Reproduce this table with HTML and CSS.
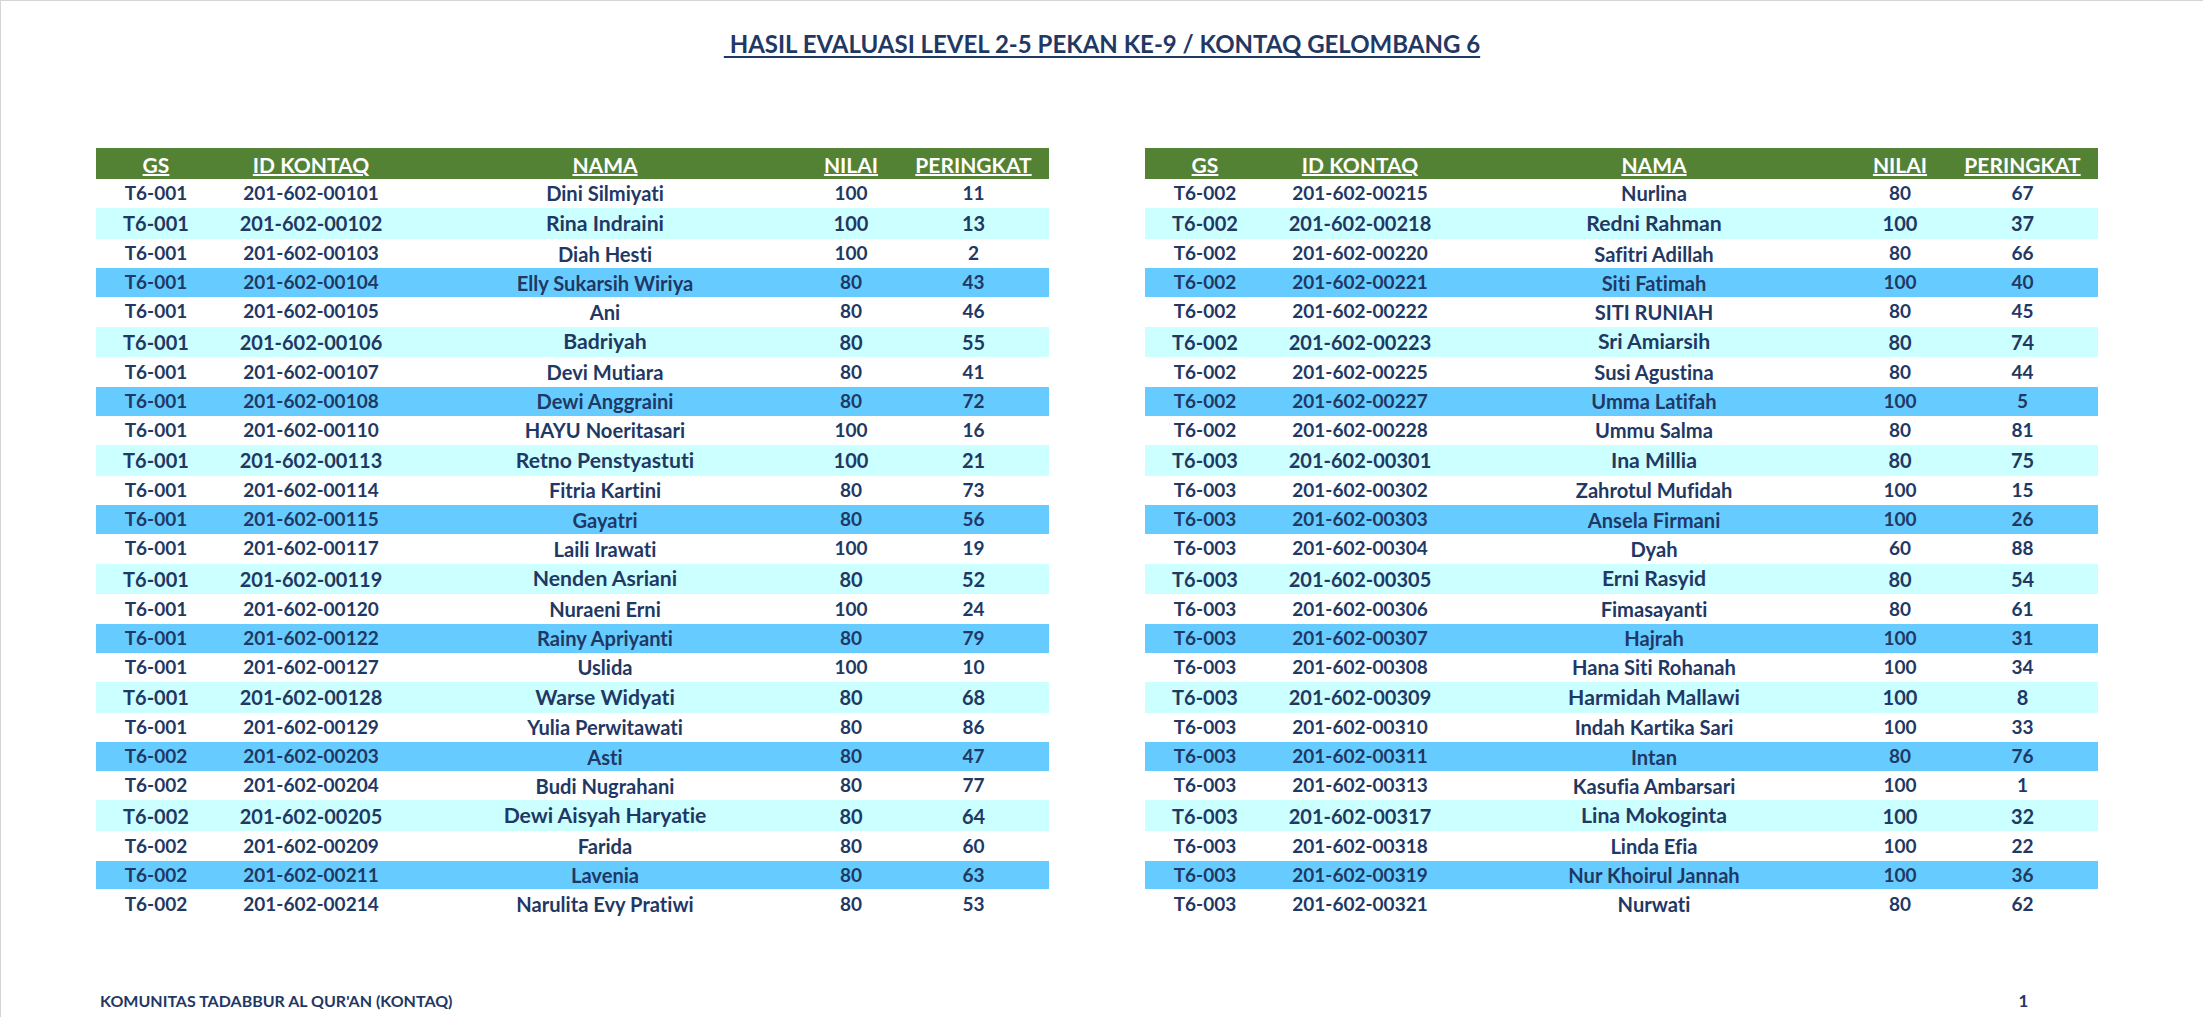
FILE: index.html
```html
<!DOCTYPE html>
<html lang="id">
<head>
<meta charset="utf-8">
<title>Hasil Evaluasi Level 2-5 Pekan ke-9</title>
<link rel="stylesheet" href="styles.css">
</head>
<body>
<div class="page">
  <h1 class="title"><span class="title-text">&nbsp;HASIL EVALUASI LEVEL 2-5 PEKAN KE-9 / KONTAQ GELOMBANG 6</span></h1>

  <div class="tables">
    <table class="grid">
      <colgroup><col class="c-gs"><col class="c-id"><col class="c-nama"><col class="c-nilai"><col class="c-rank"></colgroup>
      <thead>
        <tr><th><span>GS</span></th><th><span>ID KONTAQ</span></th><th><span>NAMA</span></th><th><span>NILAI</span></th><th><span>PERINGKAT</span></th></tr>
      </thead>
      <tbody>
        <tr><td>T6-001</td><td>201-602-00101</td><td>Dini Silmiyati</td><td>100</td><td>11</td></tr>
        <tr><td>T6-001</td><td>201-602-00102</td><td>Rina Indraini</td><td>100</td><td>13</td></tr>
        <tr><td>T6-001</td><td>201-602-00103</td><td>Diah Hesti</td><td>100</td><td>2</td></tr>
        <tr><td>T6-001</td><td>201-602-00104</td><td>Elly Sukarsih Wiriya</td><td>80</td><td>43</td></tr>
        <tr><td>T6-001</td><td>201-602-00105</td><td>Ani</td><td>80</td><td>46</td></tr>
        <tr><td>T6-001</td><td>201-602-00106</td><td>Badriyah</td><td>80</td><td>55</td></tr>
        <tr><td>T6-001</td><td>201-602-00107</td><td>Devi Mutiara</td><td>80</td><td>41</td></tr>
        <tr><td>T6-001</td><td>201-602-00108</td><td>Dewi Anggraini</td><td>80</td><td>72</td></tr>
        <tr><td>T6-001</td><td>201-602-00110</td><td>HAYU Noeritasari</td><td>100</td><td>16</td></tr>
        <tr><td>T6-001</td><td>201-602-00113</td><td>Retno Penstyastuti</td><td>100</td><td>21</td></tr>
        <tr><td>T6-001</td><td>201-602-00114</td><td>Fitria Kartini</td><td>80</td><td>73</td></tr>
        <tr><td>T6-001</td><td>201-602-00115</td><td>Gayatri</td><td>80</td><td>56</td></tr>
        <tr><td>T6-001</td><td>201-602-00117</td><td>Laili Irawati</td><td>100</td><td>19</td></tr>
        <tr><td>T6-001</td><td>201-602-00119</td><td>Nenden Asriani</td><td>80</td><td>52</td></tr>
        <tr><td>T6-001</td><td>201-602-00120</td><td>Nuraeni Erni</td><td>100</td><td>24</td></tr>
        <tr><td>T6-001</td><td>201-602-00122</td><td>Rainy Apriyanti</td><td>80</td><td>79</td></tr>
        <tr><td>T6-001</td><td>201-602-00127</td><td>Uslida</td><td>100</td><td>10</td></tr>
        <tr><td>T6-001</td><td>201-602-00128</td><td>Warse Widyati</td><td>80</td><td>68</td></tr>
        <tr><td>T6-001</td><td>201-602-00129</td><td>Yulia Perwitawati</td><td>80</td><td>86</td></tr>
        <tr><td>T6-002</td><td>201-602-00203</td><td>Asti</td><td>80</td><td>47</td></tr>
        <tr><td>T6-002</td><td>201-602-00204</td><td>Budi Nugrahani</td><td>80</td><td>77</td></tr>
        <tr><td>T6-002</td><td>201-602-00205</td><td>Dewi Aisyah Haryatie</td><td>80</td><td>64</td></tr>
        <tr><td>T6-002</td><td>201-602-00209</td><td>Farida</td><td>80</td><td>60</td></tr>
        <tr><td>T6-002</td><td>201-602-00211</td><td>Lavenia</td><td>80</td><td>63</td></tr>
        <tr><td>T6-002</td><td>201-602-00214</td><td>Narulita Evy Pratiwi</td><td>80</td><td>53</td></tr>
      </tbody>
    </table>

    <table class="grid">
      <colgroup><col class="c-gs"><col class="c-id"><col class="c-nama"><col class="c-nilai"><col class="c-rank"></colgroup>
      <thead>
        <tr><th><span>GS</span></th><th><span>ID KONTAQ</span></th><th><span>NAMA</span></th><th><span>NILAI</span></th><th><span>PERINGKAT</span></th></tr>
      </thead>
      <tbody>
        <tr><td>T6-002</td><td>201-602-00215</td><td>Nurlina</td><td>80</td><td>67</td></tr>
        <tr><td>T6-002</td><td>201-602-00218</td><td>Redni Rahman</td><td>100</td><td>37</td></tr>
        <tr><td>T6-002</td><td>201-602-00220</td><td>Safitri Adillah</td><td>80</td><td>66</td></tr>
        <tr><td>T6-002</td><td>201-602-00221</td><td>Siti Fatimah</td><td>100</td><td>40</td></tr>
        <tr><td>T6-002</td><td>201-602-00222</td><td>SITI RUNIAH</td><td>80</td><td>45</td></tr>
        <tr><td>T6-002</td><td>201-602-00223</td><td>Sri Amiarsih</td><td>80</td><td>74</td></tr>
        <tr><td>T6-002</td><td>201-602-00225</td><td>Susi Agustina</td><td>80</td><td>44</td></tr>
        <tr><td>T6-002</td><td>201-602-00227</td><td>Umma Latifah</td><td>100</td><td>5</td></tr>
        <tr><td>T6-002</td><td>201-602-00228</td><td>Ummu Salma</td><td>80</td><td>81</td></tr>
        <tr><td>T6-003</td><td>201-602-00301</td><td>Ina Millia</td><td>80</td><td>75</td></tr>
        <tr><td>T6-003</td><td>201-602-00302</td><td>Zahrotul Mufidah</td><td>100</td><td>15</td></tr>
        <tr><td>T6-003</td><td>201-602-00303</td><td>Ansela Firmani</td><td>100</td><td>26</td></tr>
        <tr><td>T6-003</td><td>201-602-00304</td><td>Dyah</td><td>60</td><td>88</td></tr>
        <tr><td>T6-003</td><td>201-602-00305</td><td>Erni Rasyid</td><td>80</td><td>54</td></tr>
        <tr><td>T6-003</td><td>201-602-00306</td><td>Fimasayanti</td><td>80</td><td>61</td></tr>
        <tr><td>T6-003</td><td>201-602-00307</td><td>Hajrah</td><td>100</td><td>31</td></tr>
        <tr><td>T6-003</td><td>201-602-00308</td><td>Hana Siti Rohanah</td><td>100</td><td>34</td></tr>
        <tr><td>T6-003</td><td>201-602-00309</td><td>Harmidah Mallawi</td><td>100</td><td>8</td></tr>
        <tr><td>T6-003</td><td>201-602-00310</td><td>Indah Kartika Sari</td><td>100</td><td>33</td></tr>
        <tr><td>T6-003</td><td>201-602-00311</td><td>Intan</td><td>80</td><td>76</td></tr>
        <tr><td>T6-003</td><td>201-602-00313</td><td>Kasufia Ambarsari</td><td>100</td><td>1</td></tr>
        <tr><td>T6-003</td><td>201-602-00317</td><td>Lina Mokoginta</td><td>100</td><td>32</td></tr>
        <tr><td>T6-003</td><td>201-602-00318</td><td>Linda Efia</td><td>100</td><td>22</td></tr>
        <tr><td>T6-003</td><td>201-602-00319</td><td>Nur Khoirul Jannah</td><td>100</td><td>36</td></tr>
        <tr><td>T6-003</td><td>201-602-00321</td><td>Nurwati</td><td>80</td><td>62</td></tr>
      </tbody>
    </table>
  </div>

  <footer class="footer">
    <span class="footer-org">KOMUNITAS TADABBUR AL QUR'AN (KONTAQ)</span>
    <span class="footer-page">1</span>
  </footer>
</div>
</body>
</html>
```

FILE: styles.css
```css
html, body {
  margin: 0;
  padding: 0;
  background: #ffffff;
}

body {
  width: 2203px;
  height: 1017px;
  box-sizing: border-box;
  border-top: 1px solid #d4d4d4;
  border-left: 1px solid #d4d4d4;
  overflow: hidden;
  font-family: Lato, "Open Sans", "Liberation Sans", sans-serif;
  font-weight: 700;
  font-variant-ligatures: none;
  font-feature-settings: "liga" 0, "clig" 0;
  color: #1f3864;
}

.page {
  display: flex;
  flex-direction: column;
}

.title {
  margin: 28px 0 0 0;
  font-size: 24px;
  line-height: 30px;
  font-weight: 700;
  text-align: center;
  color: #1f3864;
}

.title-text {
  text-decoration: underline;
  text-decoration-thickness: 2px;
  text-underline-offset: 3px;
}

.tables {
  display: flex;
  gap: 96px;
  margin-top: 89px;
  padding-left: 95px;
}

.grid {
  width: 953px;
  table-layout: fixed;
  border-collapse: collapse;
  border-spacing: 0;
}

.c-gs { width: 120px; }
.c-id { width: 190px; }
.c-nama { width: 398px; }
.c-nilai { width: 94px; }
.c-rank { width: 151px; }

.grid th,
.grid td {
  padding: 0;
  text-align: center;
  vertical-align: middle;
  white-space: nowrap;
  line-height: 1.2;
}

.grid thead tr {
  height: 30.67px;
  background: #548235;
}

.grid th {
  padding-top: 3px;
  font-size: 21px;
  font-weight: 700;
  color: #ffffff;
}

.grid th span {
  text-decoration: underline;
  text-decoration-thickness: 2px;
  text-underline-offset: 1px;
}

.grid tbody tr {
  height: 29.45px;
  font-size: 19px;
  background: #ffffff;
}

.grid tbody tr:nth-child(4n+2) {
  height: 30.8px;
  font-size: 20px;
  background: #ccffff;
}

.grid tbody tr:nth-child(4n) {
  height: 28.8px;
  background: #66ccff;
}

.grid tbody td:nth-child(3) {
  font-size: 1.06em;
}

.footer {
  display: flex;
  justify-content: space-between;
  align-items: baseline;
  margin-top: 72px;
  padding-left: 99px;
  padding-right: 104px;
  line-height: 20px;
}

.footer-org {
  font-size: 16px;
}

.footer-page {
  width: 151px;
  text-align: center;
  font-size: 17px;
}
```
